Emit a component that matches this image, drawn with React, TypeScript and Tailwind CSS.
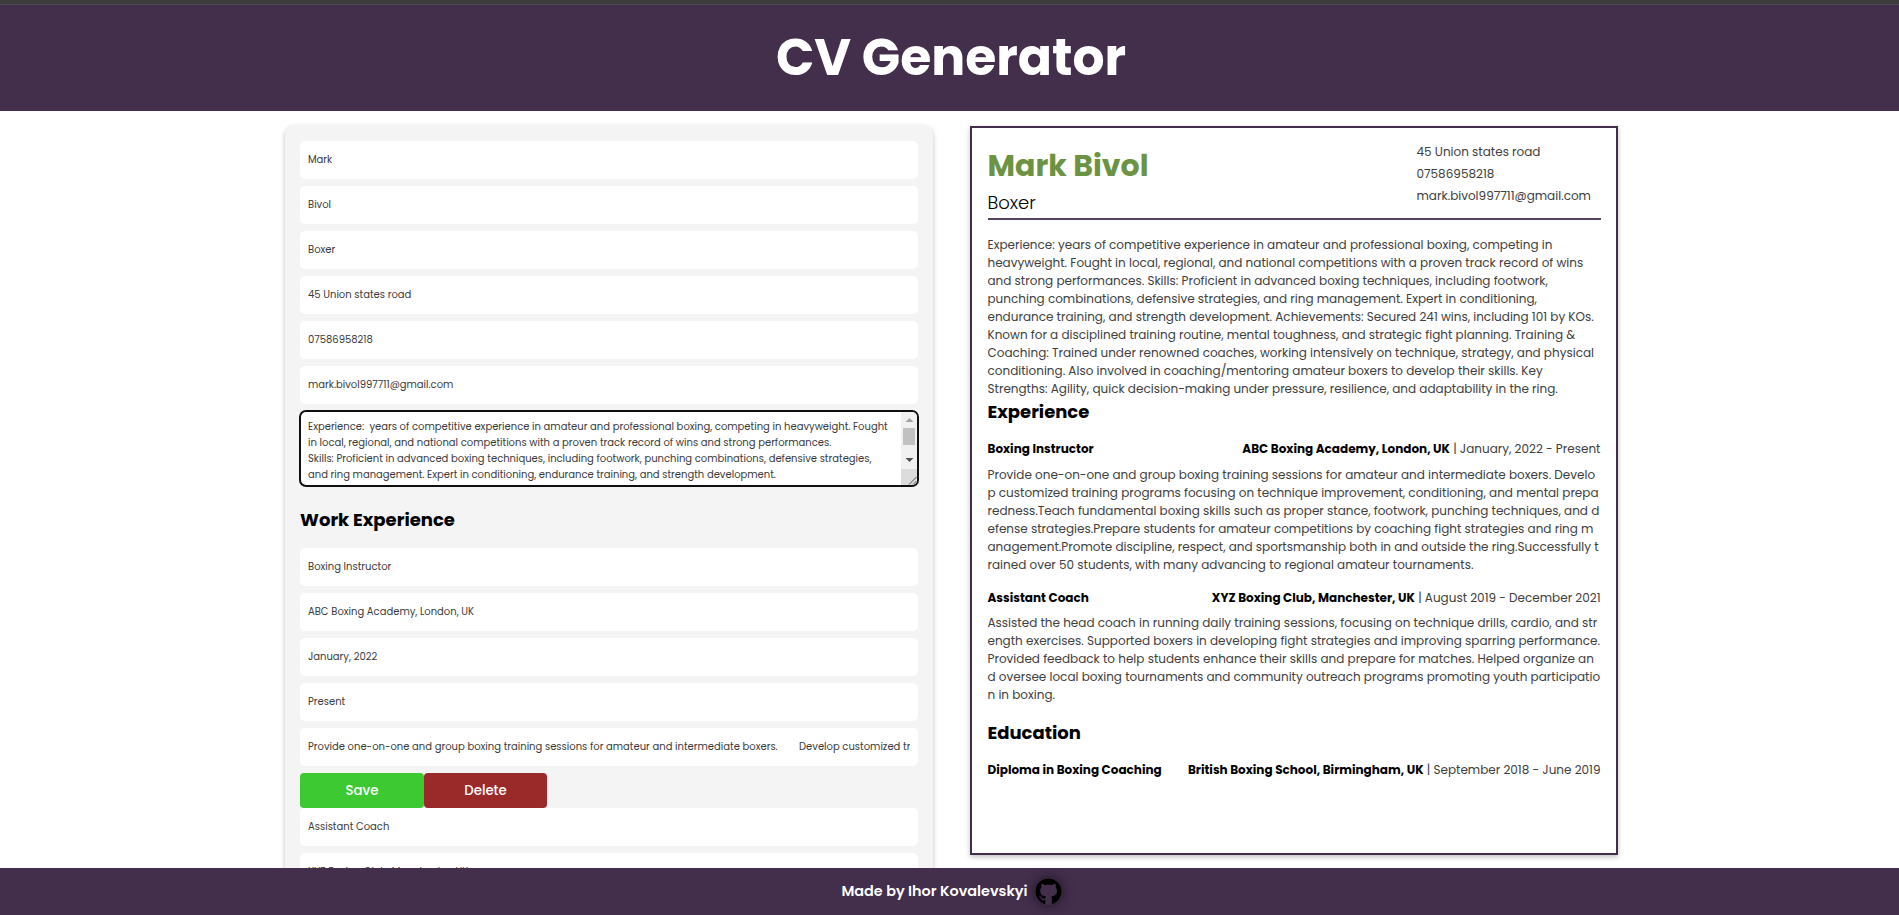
import type { ReactNode } from "react";
import { FaGithub } from "react-icons/fa";

const personal = ["Mark", "Bivol", "Boxer", "45 Union states road", "07586958218", "mark.bivol997711@gmail.com"];

const about = [
  "Experience:  years of competitive experience in amateur and professional boxing, competing in heavyweight. Fought",
  "in local, regional, and national competitions with a proven track record of wins and strong performances.",
  "Skills: Proficient in advanced boxing techniques, including footwork, punching combinations, defensive strategies,",
  "and ring management. Expert in conditioning, endurance training, and strength development.",
];

const firstJob = ["Boxing Instructor", "ABC Boxing Academy, London, UK", "January, 2022", "Present"];

const contacts = ["45 Union states road", "07586958218", "mark.bivol997711@gmail.com"];

const summary = [
  "Experience: years of competitive experience in amateur and professional boxing, competing in",
  "heavyweight. Fought in local, regional, and national competitions with a proven track record of wins",
  "and strong performances. Skills: Proficient in advanced boxing techniques, including footwork,",
  "punching combinations, defensive strategies, and ring management. Expert in conditioning,",
  "endurance training, and strength development. Achievements: Secured 241 wins, including 101 by KOs.",
  "Known for a disciplined training routine, mental toughness, and strategic fight planning. Training &",
  "Coaching: Trained under renowned coaches, working intensively on technique, strategy, and physical",
  "conditioning. Also involved in coaching/mentoring amateur boxers to develop their skills. Key",
  "Strengths: Agility, quick decision-making under pressure, resilience, and adaptability in the ring.",
];

const instructorLines = [
  "Provide one-on-one and group boxing training sessions for amateur and intermediate boxers. Develo",
  "p customized training programs focusing on technique improvement, conditioning, and mental prepa",
  "redness.Teach fundamental boxing skills such as proper stance, footwork, punching techniques, and d",
  "efense strategies.Prepare students for amateur competitions by coaching fight strategies and ring m",
  "anagement.Promote discipline, respect, and sportsmanship both in and outside the ring.Successfully t",
  "rained over 50 students, with many advancing to regional amateur tournaments.",
];

const assistantLines = [
  "Assisted the head coach in running daily training sessions, focusing on technique drills, cardio, and str",
  "ength exercises. Supported boxers in developing fight strategies and improving sparring performance.",
  "Provided feedback to help students enhance their skills and prepare for matches. Helped organize an",
  "d oversee local boxing tournaments and community outreach programs promoting youth participatio",
  "n in boxing.",
];

function Field({ children }: { children: ReactNode }) {
  return (
    <div className="flex h-[38px] shrink-0 items-center rounded-[5px] bg-white px-2 text-[10px] leading-4 whitespace-pre text-[#3a3a3a]">
      <div className="flex min-w-0 flex-1 overflow-hidden">{children}</div>
    </div>
  );
}

function Lines({ items }: { items: string[] }) {
  return (
    <div className="text-[12px] leading-[18px] whitespace-pre text-[#404040]">
      {items.map((l) => (
        <div key={l}>{l}</div>
      ))}
    </div>
  );
}

function Entry({ title, place, dates }: { title: string; place: string; dates: string }) {
  return (
    <div className="flex h-[18px] items-center justify-between text-[12px] leading-[18px] whitespace-pre">
      <span className="font-bold text-black">{title}</span>
      <span className="text-[#404040]">
        <span className="font-bold text-black">{place}</span> | {dates}
      </span>
    </div>
  );
}

function AboutBox() {
  return (
    <div className="-mx-px -mt-px flex h-[77px] shrink-0 overflow-hidden rounded-[7px] border-2 border-[#101010] bg-white">
      <div className="min-w-0 flex-1 pt-[7px] pl-[7px] text-[10px] leading-4 whitespace-pre text-[#3a3a3a]">
        {about.map((l) => (
          <div key={l}>{l}</div>
        ))}
      </div>
      <div className="flex w-4 shrink-0 flex-col bg-[#f1f1f1]">
        <svg className="h-4 w-4 shrink-0" viewBox="0 0 16 16">
          <path d="M4.500 10h8L8.500 6z" fill="#a3a3a3" />
        </svg>
        <div className="mx-[2px] h-[17px] shrink-0 bg-[#c1c1c1]" />
        <svg className="mt-[7px] h-4 w-4 shrink-0" viewBox="0 0 16 16">
          <path d="M4.500 6h8l-4 4z" fill="#505050" />
        </svg>
        <svg className="mt-[1px] h-4 w-4 shrink-0 bg-[#dcdcdc]" viewBox="0 0 16 16">
          <path d="M8 15.500 15.500 8M12 15.500 15.500 12" stroke="#555" strokeWidth="1" fill="none" />
        </svg>
      </div>
    </div>
  );
}

export default function App() {
  return (
    <div className="flex h-[915px] w-full flex-col overflow-hidden bg-white font-[Poppins,Inter,sans-serif]">
      <div className="h-[5px] shrink-0 border-b border-[#4a4a4a] bg-[#3c3c3c]" />
      <header className="flex h-[106px] shrink-0 items-center justify-center bg-[#432e4c] pl-[3px]">
        <h1 className="text-[50.400px] leading-none font-bold text-white">CV Generator</h1>
      </header>

      <main className="flex h-[757px] shrink-0 items-start overflow-hidden pt-[14px] pl-[285px]">
        <section className="flex h-[900px] w-[648px] shrink-0 flex-col gap-[7px] rounded-[10px] bg-[#f4f4f4] px-[15px] pt-4 shadow-[0_2px_5px_rgba(0,0,0,0.25)]">
          {personal.map((t) => (
            <Field key={t}>{t}</Field>
          ))}
          <AboutBox />
          <h2 className="mt-[12px] mb-[8px] h-[27px] text-[18px] leading-[27px] font-bold text-black">
            Work Experience
          </h2>
          {firstJob.map((t) => (
            <Field key={t}>{t}</Field>
          ))}
          <Field>
            <span className="w-[491px] shrink-0">
              Provide one-on-one and group boxing training sessions for amateur and intermediate boxers.
            </span>
            <span>Develop customized tr</span>
          </Field>
          <div className="-mb-[7px] flex h-[35px] shrink-0 text-[13.3px] font-medium text-white">
            <div className="flex w-[124px] items-center justify-center rounded-[4px] bg-[#3dc932]">Save</div>
            <div className="flex w-[123px] items-center justify-center rounded-[4px] bg-[#9a2a2a]">Delete</div>
          </div>
          <Field>Assistant Coach</Field>
          <Field>XYZ Boxing Club, Manchester, UK</Field>
        </section>

        <section className="mt-px ml-[37px] h-[729px] w-[648px] shrink-0 border-2 border-[#432e4c] bg-white px-[15.5px] shadow-[0_2px_5px_rgba(0,0,0,0.25)]">
          <div className="flex h-[92px] justify-between border-b-2 border-[#55435d]">
            <div>
              <div className="mt-[17px] text-[30px] leading-[42px] font-bold text-[#6b9342]">Mark Bivol</div>
              <div className="mt-[2px] text-[18px] leading-[27px] font-light text-black">Boxer</div>
            </div>
            <div className="w-[184px] pt-[13px] text-[12px] leading-[22px] text-[#404040]">
              {contacts.map((c) => (
                <div key={c}>{c}</div>
              ))}
            </div>
          </div>

          <div className="mt-4">
            <Lines items={summary} />
          </div>

          <h2 className="pb-px text-[18px] leading-[27px] font-bold text-black">Experience</h2>
          <div className="mt-[14px] mb-2">
            <Entry title="Boxing Instructor" place="ABC Boxing Academy, London, UK" dates="January, 2022 - Present" />
          </div>
          <Lines items={instructorLines} />
          <div className="mt-[15px] mb-[7px]">
            <Entry title="Assistant Coach" place="XYZ Boxing Club, Manchester, UK" dates="August 2019 - December 2021" />
          </div>
          <Lines items={assistantLines} />
          <h2 className="mt-[15px] text-[18px] leading-[27px] font-bold text-black">Education</h2>
          <div className="mt-[15px]">
            <Entry
              title="Diploma in Boxing Coaching"
              place="British Boxing School, Birmingham, UK"
              dates="September 2018 - June 2019"
            />
          </div>
        </section>
      </main>

      <footer className="flex h-[47px] shrink-0 items-center justify-center gap-[7px] bg-[#432e4c] pl-[4px]">
        <span className="text-[14.4px] leading-none font-semibold text-white">Made by Ihor Kovalevskyi</span>
        <FaGithub className="h-[27px] w-[27px] rounded-full text-black shadow-[0_0_12px_rgba(0,0,0,0.6)]" />
      </footer>
    </div>
  );
}
